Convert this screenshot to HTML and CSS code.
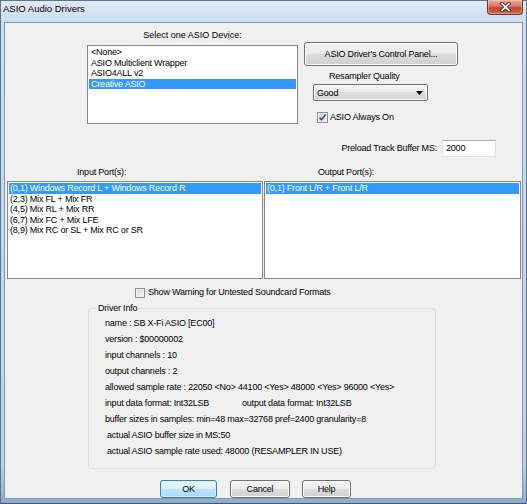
FILE: index.html
```html
<!DOCTYPE html>
<html>
<head>
<meta charset="utf-8">
<title>ASIO Audio Drivers</title>
<link rel="stylesheet" href="styles.css">
</head>
<body>
<div class="window">
  <div class="titlebar">
    <span class="title">ASIO Audio Drivers</span>
    <div class="close">
      <svg width="13" height="10" viewBox="0 0 13 10">
        <path d="M3 1.5 L10 8.5 M10 1.5 L3 8.5" stroke="#4a1a12" stroke-width="3.4" fill="none" stroke-linecap="square"/>
        <path d="M3 1.5 L10 8.5 M10 1.5 L3 8.5" stroke="#ffffff" stroke-width="1.8" fill="none" stroke-linecap="square"/>
      </svg>
    </div>
  </div>
  <div class="client">
    <div class="top">
      <div class="device-col">
        <div class="label">Select one ASIO Device:</div>
        <ul class="listbox devices">
          <li>&lt;None&gt;</li>
          <li>ASIO Multiclient Wrapper</li>
          <li>ASIO4ALL v2</li>
          <li class="sel">Creative ASIO</li>
        </ul>
      </div>
      <div class="options-col">
        <button class="btn panel-btn">ASIO Driver's Control Panel...</button>
        <div class="label resampler-label">Resampler Quality</div>
        <div class="combo">
          <span>Good</span>
          <svg class="arrow" width="7" height="4" viewBox="0 0 7 4"><path d="M0 0 H7 L3.5 4 Z" fill="#000"/></svg>
        </div>
        <div class="check always-on">
          <svg class="box" width="11" height="11" viewBox="0 0 11 11">
            <defs>
              <linearGradient id="cb" x1="0" y1="0" x2="1" y2="1">
                <stop offset="0" stop-color="#c9d4e4"/>
                <stop offset="1" stop-color="#f4f6f9"/>
              </linearGradient>
            </defs>
            <rect x="0.5" y="0.5" width="10" height="10" fill="#f6f6f6" stroke="#8f8f8f"/>
            <rect x="2" y="2" width="7" height="7" fill="url(#cb)"/>
            <path d="M2.6 5.4 L4.6 7.8 L8.6 2.6" fill="none" stroke="#2f4785" stroke-width="1.6"/>
          </svg>
          <span>ASIO Always On</span>
        </div>
      </div>
    </div>

    <div class="preload">
      <span class="label">Preload Track Buffer MS:</span>
      <div class="textbox">2000</div>
    </div>

    <div class="ports">
      <div class="port-col input-col">
        <div class="label">Input Port(s):</div>
        <ul class="listbox port-list">
          <li class="sel">(0,1) Windows Record L + Windows Record R</li>
          <li>(2,3) Mix FL + Mix FR</li>
          <li>(4,5) Mix RL + Mix RR</li>
          <li>(6,7) Mix FC + Mix LFE</li>
          <li>(8,9) Mix RC or SL + Mix RC or SR</li>
        </ul>
      </div>
      <div class="port-col output-col">
        <div class="label">Output Port(s):</div>
        <ul class="listbox port-list">
          <li class="sel">(0,1) Front L/R + Front L/R</li>
        </ul>
      </div>
    </div>

    <div class="check warn">
      <span class="box plain"></span>
      <span>Show Warning for Untested Soundcard Formats</span>
    </div>

    <fieldset class="group">
      <legend>Driver Info</legend>
      <div class="info">
        <div class="line">name : SB X-Fi ASIO [EC00]</div>
        <div class="line">version : $00000002</div>
        <div class="line">input channels : 10</div>
        <div class="line">output channels : 2</div>
        <div class="line">allowed sample rate : 22050 &lt;No&gt; 44100 &lt;Yes&gt; 48000 &lt;Yes&gt; 96000 &lt;Yes&gt;</div>
        <div class="line"><span class="col">input data format: Int32LSB</span><span>output data format: Int32LSB</span></div>
        <div class="line">buffer sizes in samples: min=48 max=32768 pref=2400 granularity=8</div>
        <div class="line indent">actual ASIO buffer size in MS:50</div>
        <div class="line indent">actual ASIO sample rate used: 48000 (RESAMPLER IN USE)</div>
      </div>
    </fieldset>

    <div class="buttons">
      <button class="btn default ok">OK</button>
      <button class="btn cancel">Cancel</button>
      <button class="btn help">Help</button>
    </div>
  </div>
</div>
</body>
</html>
```

FILE: styles.css
```css
* {
  box-sizing: border-box;
}

html,
body {
  margin: 0;
  padding: 0;
}

body {
  width: 527px;
  height: 504px;
  overflow: hidden;
  font-family: "Liberation Sans", Arial, sans-serif;
  font-size: 9px;
  letter-spacing: -0.2px;
  color: #000;
  background: #c4d6ea;
}

.window {
  width: 527px;
  height: 504px;
  border: 1px solid #5b7593;
  border-bottom-color: #3d5a7e;
  background: linear-gradient(#e0eaf6 0, #cbdcef 22px, #bdd2e9 92%, #8fabcb 100%);
  padding: 0 3px 4px 3px;
  display: flex;
  flex-direction: column;
}

.titlebar {
  height: 21px;
  flex: none;
  display: flex;
  justify-content: space-between;
  align-items: flex-start;
}

.title {
  font-size: 9.5px;
  letter-spacing: 0;
  line-height: 10px;
  margin-top: 3px;
  margin-left: -1px;
  color: #000;
}

.close {
  width: 36px;
  height: 15px;
  margin-top: -1px;
  border: 1px solid #6e3328;
  border-top: none;
  border-radius: 0 0 4px 4px;
  background: linear-gradient(#e8ab9c 0, #d77a66 45%, #c4432c 55%, #d06650 100%);
  box-shadow: inset 0 0 0 1px rgba(255, 220, 210, 0.45);
  display: flex;
  align-items: center;
  justify-content: center;
}

.client {
  flex: 1;
  background: #f0f0f0;
  border: 1px solid #8396ad;
  display: flex;
  flex-direction: column;
  align-items: flex-start;
}

.label {
  line-height: 11px;
  height: 11px;
  white-space: nowrap;
}

/* top area */
.top {
  display: flex;
  padding-left: 82px;
}

.device-col {
  width: 211px;
  margin-top: 7px;
  display: flex;
  flex-direction: column;
}

.device-col .label {
  text-align: center;
  letter-spacing: 0;
}

.listbox {
  list-style: none;
  margin: 0;
  padding: 1px;
  background: #fff;
  border: 1px solid #828790;
}

.listbox li {
  height: 10.5px;
  line-height: 10.5px;
  padding-left: 2px;
  white-space: nowrap;
}

.listbox li.sel {
  background: #3399ff;
  color: #fff;
}

.devices {
  margin-top: 4px;
  height: 79px;
}

.options-col {
  margin-left: 6px;
  display: flex;
  flex-direction: column;
  align-items: flex-start;
}

.btn {
  font-family: "Liberation Sans", Arial, sans-serif;
  font-size: 9px;
  letter-spacing: -0.2px;
  color: #000;
  padding: 0;
  border: 1px solid #707070;
  border-radius: 3px;
  background: linear-gradient(#f2f2f2 0, #ebebeb 50%, #dddddd 50%, #cfcfcf 100%);
  box-shadow: inset 0 0 0 1px #fbfbfb;
  text-align: center;
  line-height: 1;
}

.panel-btn {
  margin-top: 19px;
  width: 154px;
  height: 24px;
}

.resampler-label {
  margin-top: 5px;
  padding-left: 25px;
}

.combo {
  margin-top: 2px;
  margin-left: 9px;
  width: 115px;
  height: 17px;
  border: 1px solid #707070;
  border-radius: 2px;
  background: linear-gradient(#f4f4f4 0, #ececec 50%, #dfdfdf 50%, #d3d3d3 100%);
  box-shadow: inset 0 0 0 1px #fbfbfb;
  display: flex;
  align-items: center;
  justify-content: space-between;
  padding: 0 4px 0 3px;
}

.check {
  display: flex;
  align-items: center;
  height: 11px;
  line-height: 11px;
  white-space: nowrap;
}

.always-on {
  margin-top: 11px;
  margin-left: 13px;
}

.always-on .box {
  margin-right: 2px;
}

.box.plain {
  width: 10px;
  height: 10px;
  border: 1px solid #8e8f8f;
  background: #f4f4f4;
  background-image: linear-gradient(135deg, #d6d6d6 0, #f6f6f6 100%);
  background-clip: content-box;
  padding: 1px;
  margin-right: 3px;
}

/* preload */
.preload {
  align-self: stretch;
  display: flex;
  justify-content: flex-end;
  align-items: center;
  gap: 5px;
  margin-top: 16px;
  padding-right: 26px;
}

.textbox {
  width: 54px;
  height: 17px;
  background: #fff;
  border: 1px solid #dbdfe6;
  border-top-color: #abadb3;
  border-left-color: #e2e3ea;
  line-height: 15px;
  padding-left: 3px;
}

/* ports */
.ports {
  display: flex;
  gap: 1px;
  margin-top: 10px;
  padding-left: 2px;
}

.port-col {
  display: flex;
  flex-direction: column;
}

.input-col {
  width: 256px;
}

.output-col {
  width: 257px;
}

.input-col .label {
  padding-left: 70px;
}

.output-col .label {
  padding-left: 54px;
}

.port-list {
  margin-top: 3px;
  height: 98px;
}

.port-list li {
  padding-left: 1px;
}

/* warning */
.warn {
  margin-top: 8px;
  margin-left: 130px;
}

/* group box */
.group {
  margin: 5px 0 0 83px;
  width: 348px;
  padding: 1px 0 9px 0;
  border: 1px solid #d5dfe5;
  border-radius: 3px;
  min-inline-size: 0;
}

.group legend {
  margin-left: 8px;
  padding: 0 1px;
  line-height: 11px;
  height: 11px;
}

.info {
  padding-left: 16px;
}

.line {
  height: 16px;
  line-height: 16px;
  white-space: nowrap;
}

.line .col {
  display: inline-block;
  width: 137px;
}

.line.indent {
  padding-left: 2px;
}

/* bottom buttons */
.buttons {
  display: flex;
  margin-top: 11px;
  padding-left: 155px;
}

.buttons .btn {
  height: 18px;
}

.ok {
  width: 57px;
  margin-right: 13px;
}

.cancel {
  width: 60px;
  margin-right: 12px;
}

.help {
  width: 49px;
}

.btn.default {
  border-color: #3c7fb1;
  background: linear-gradient(#eaf6fd 0, #d9f0fc 50%, #bee6fd 50%, #a7d9f5 100%);
  box-shadow: inset 0 0 0 1px #d4ecfb;
}
```
